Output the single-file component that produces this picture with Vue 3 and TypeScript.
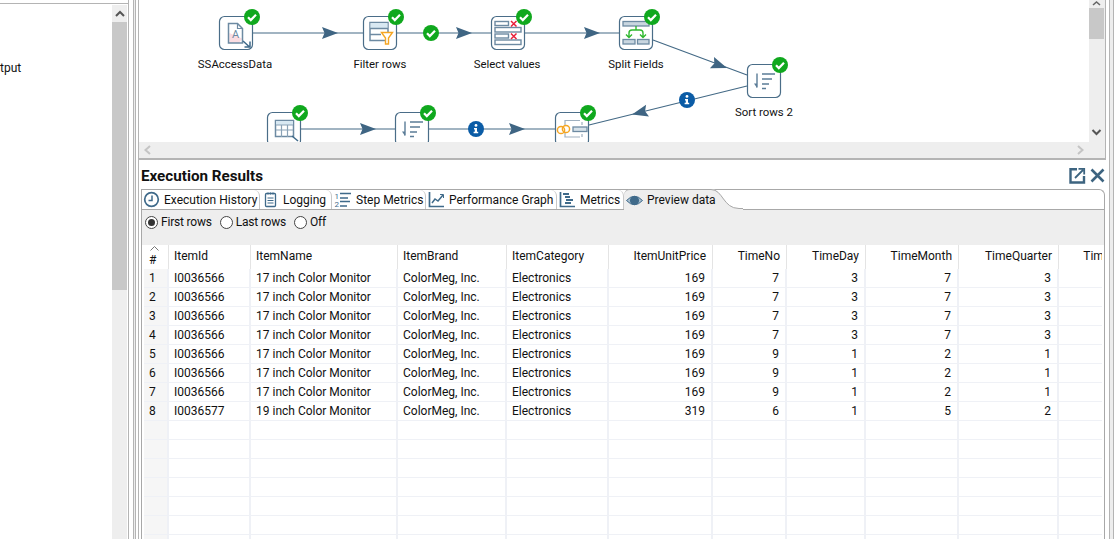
<script setup lang="ts">
interface Column { key: string; label: string; width: number; end?: boolean }
interface Arrow { x: number; y: number; angle: number }

const columns: Column[] = [
  { key: "id", label: "ItemId", width: 82 },
  { key: "name", label: "ItemName", width: 147 },
  { key: "brand", label: "ItemBrand", width: 109 },
  { key: "category", label: "ItemCategory", width: 102 },
  { key: "price", label: "ItemUnitPrice", width: 104, end: true },
  { key: "no", label: "TimeNo", width: 74, end: true },
  { key: "day", label: "TimeDay", width: 79, end: true },
  { key: "month", label: "TimeMonth", width: 93, end: true },
  { key: "quarter", label: "TimeQuarter", width: 100, end: true },
  { key: "year", label: "TimeYear", width: 82, end: true },
];

const row = (id: string, name: string, price: string, no: string, day: string, month: string, quarter: string): Record<string, string> => ({
  id, name, brand: "ColorMeg, Inc.", category: "Electronics", price, no, day, month, quarter, year: "",
});

const rows: Record<string, string>[] = [
  row("I0036566", "17 inch Color Monitor", "169", "7", "3", "7", "3"),
  row("I0036566", "17 inch Color Monitor", "169", "7", "3", "7", "3"),
  row("I0036566", "17 inch Color Monitor", "169", "7", "3", "7", "3"),
  row("I0036566", "17 inch Color Monitor", "169", "7", "3", "7", "3"),
  row("I0036566", "17 inch Color Monitor", "169", "9", "1", "2", "1"),
  row("I0036566", "17 inch Color Monitor", "169", "9", "1", "2", "1"),
  row("I0036566", "17 inch Color Monitor", "169", "9", "1", "2", "1"),
  row("I0036577", "19 inch Color Monitor", "319", "6", "1", "5", "2"),
];
const emptyRows = 7;

const nodes = [
  { x: 219, y: 16 }, { x: 363, y: 16 }, { x: 491, y: 16 }, { x: 619, y: 16 },
  { x: 747, y: 64 }, { x: 267, y: 112 }, { x: 395, y: 112 }, { x: 555, y: 112 },
];
const checks = [
  [252, 17], [396, 17], [524, 17], [652, 17], [780, 65], [300, 113], [428, 113], [588, 113], [431, 33],
];
const infos = [[476, 129], [687, 100]];
const labels = [
  { x: 235, y: 68, text: "SSAccessData" },
  { x: 380, y: 68, text: "Filter rows" },
  { x: 507, y: 68, text: "Select values" },
  { x: 636, y: 68, text: "Split Fields" },
  { x: 764, y: 116, text: "Sort rows 2" },
];
const arrows: Arrow[] = [
  { x: 338, y: 33, angle: 0 }, { x: 472, y: 33, angle: 0 }, { x: 600, y: 33, angle: 0 },
  { x: 727, y: 68, angle: 20 }, { x: 632, y: 114.5, angle: 166 },
  { x: 376, y: 129, angle: 0 }, { x: 525, y: 129, angle: 0 },
];
</script>

<template>
  <div class="app">
    <aside class="left">
      <div class="tree"><span class="tree-item">tput</span></div>
      <div class="vbar vbar--left">
        <svg class="arrow-ico" width="16" height="17" viewBox="0 0 16 17"><path d="M4 11l4-4 4 4" fill="none" stroke="#555" stroke-width="2" /></svg>
        <div class="thumb thumb--left"></div>
      </div>
    </aside>
    <div class="sash"></div>
    <main class="main">
      <section class="top">
        <div class="diagram">
          <svg class="graph" width="950" height="142" viewBox="139 0 950 142">
            <g fill="none" stroke="#446a86" stroke-width="1.2">
              <path d="M253 33H363M397 33H491M525 33H619M653 40L747 75M747 86L589 125M301 129H395M429 129H555" />
            </g>
            <polygon
              v-for="(a, i) in arrows"
              :key="'a' + i"
              points="0,0 -16,-6 -13.5,0 -16,6"
              fill="#3f6583"
              :transform="`translate(${a.x} ${a.y}) rotate(${a.angle})`"
            />
            <rect v-for="(n, i) in nodes" :key="'n' + i" :x="n.x + 0.5" :y="n.y + 0.5" width="33" height="33" rx="5" fill="#fff" stroke="#4a6d88" stroke-width="1.2" />

            <!-- SSAccessData -->
            <path d="M229.3 43V33L241 38l1 1-3 4z" fill="#fbdde2" />
            <path d="M228.5 23.5h9l5 5v14.5h-14z" fill="none" stroke="#6d8aa2" stroke-width="1.5" />
            <path d="M237.5 23.5v5h5" fill="none" stroke="#6d8aa2" stroke-width="1.2" />
            <text x="235.5" y="38" class="ico-a">A</text>
            <path d="M243 41l6 5.5M250 41.5V47h-5.5" fill="none" stroke="#3f6a8a" stroke-width="1.5" />

            <!-- Filter rows -->
            <path d="M370 22.5h18v18h-18z" fill="#fff" stroke="#6d8aa2" stroke-width="1.5" />
            <path d="M370.5 23h17v5h-17z" fill="#d8e8f2" />
            <path d="M370 28.5h18M370 34.5h11" stroke="#6d8aa2" stroke-width="1.3" />
            <path d="M381.5 32.5h11l-4 5.5v6h-3v-6z" fill="#fff" stroke="#f5a623" stroke-width="1.4" />

            <!-- Select values -->
            <g fill="#fff" stroke="#6d8aa2" stroke-width="1.4">
              <rect x="495" y="21.5" width="13.5" height="4" />
              <rect x="495" y="27.5" width="26" height="4.5" />
              <rect x="495" y="34" width="13.5" height="4" />
              <rect x="495" y="40" width="26" height="4.5" />
            </g>
            <path d="M511 21l5.5 5.5M516.5 21l-5.5 5.5M511 33.5l5.5 5.5M516.5 33.5l-5.5 5.5" stroke="#e8203a" stroke-width="1.5" />

            <!-- Split Fields -->
            <g fill="#c9d6e0" stroke="#6d8aa2" stroke-width="1.3">
              <rect x="623" y="21.5" width="26" height="4.5" />
              <rect x="623" y="39.5" width="12" height="4.5" />
              <rect x="637.5" y="39.5" width="11.5" height="4.5" />
            </g>
            <path d="M636 26v4M629 37v-4q0-3 3-3h8q3 0 3 3v4M626 34.5l3 3 3-3M640 34.5l3 3 3-3" fill="none" stroke="#2eb82e" stroke-width="1.4" />

            <!-- Sort rows -->
            <g v-for="s in [{ x: 747, y: 64 }, { x: 395, y: 112 }]" :key="s.x" :transform="`translate(${s.x} ${s.y})`">
              <path d="M10 9.5v14" stroke="#5b7c97" stroke-width="1.4" />
              <path d="M7 19.5l3 4.5 0-4.5z" fill="#5b7c97" />
              <path d="M15 10h13M15 15h10M15 20h7M15 24.5h4" stroke="#5b7c97" stroke-width="1.4" />
            </g>

            <!-- Table input -->
            <path d="M275.5 120.5h18v16h-18z" fill="#fff" stroke="#6d8aa2" stroke-width="1.5" />
            <path d="M276 121h17v4h-17z" fill="#d8e8f2" />
            <path d="M276 125h17M276 130h17M281.5 125v12M287.5 125v12" stroke="#8aa2b6" stroke-width="1.2" />
            <path d="M292 136l6 5" stroke="#3f6a8a" stroke-width="1.5" />

            <!-- Join rows -->
            <path d="M565 126v-5.5h15M565 132v5h15M582 122v3M582 134v3" fill="none" stroke="#9fb0bf" stroke-width="1.2" />
            <circle cx="561" cy="130" r="3.6" fill="none" stroke="#f5a623" stroke-width="1.5" />
            <circle cx="566" cy="129" r="3.6" fill="none" stroke="#f5a623" stroke-width="1.5" />
            <rect x="573" y="127" width="14" height="4.5" fill="#d7e2ea" stroke="#6d8aa2" stroke-width="1.3" />

            <g v-for="(c, i) in checks" :key="'c' + i" :transform="`translate(${c[0]} ${c[1]})`">
              <circle r="8" fill="#10a81e" />
              <path d="M-4 0.3l2.8 2.8 5.2-5.4" fill="none" stroke="#fff" stroke-width="2.2" />
            </g>
            <g v-for="(c, i) in infos" :key="'i' + i" :transform="`translate(${c[0]} ${c[1]})`">
              <circle r="8" fill="#0b5ca6" />
              <circle cx="0" cy="-3.6" r="1.4" fill="#fff" />
              <path d="M-2 -1h3v3.7h1.2v1.6h-4.6v-1.6h1.2v-2.2h-0.8z" fill="#fff" />
            </g>
            <text v-for="l in labels" :key="l.text" :x="l.x" :y="l.y" class="node-label">{{ l.text }}</text>
          </svg>
        </div>
        <div class="vbar vbar--top">
          <svg class="arrow-ico" width="15" height="8" viewBox="0 0 15 8"><path d="M4 5l3.5-3 3.5 3" fill="none" stroke="#666" stroke-width="1.6" /></svg>
          <div class="thumb thumb--top"></div>
          <svg class="arrow-ico arrow-ico--down" width="15" height="10" viewBox="0 0 15 10"><path d="M3.5 3l4 4 4-4" fill="none" stroke="#555" stroke-width="2" /></svg>
        </div>
        <div class="hbar">
          <svg width="10" height="12" viewBox="0 0 10 12"><path d="M7 2L2.5 6 7 10" fill="none" stroke="#c4c4c4" stroke-width="2" /></svg>
          <svg width="10" height="12" viewBox="0 0 10 12"><path d="M3 2l4.5 4L3 10" fill="none" stroke="#c4c4c4" stroke-width="2" /></svg>
        </div>
      </section>

      <section class="results">
        <header class="results-head">
          <h2 class="title">Execution Results</h2>
          <div class="head-icons">
            <svg width="17" height="17" viewBox="0 0 17 17">
              <path d="M8 2.2H1.5v13.3H15V9" fill="none" stroke="#3d6480" stroke-width="2.4" />
              <path d="M6 11l8-8M9.5 1.8h5.7v5.7" fill="none" stroke="#3d6480" stroke-width="1.8" />
            </svg>
            <svg width="15" height="15" viewBox="0 0 15 15"><path d="M1.5 1.5l12 12M13.5 1.5l-12 12" stroke="#3d6480" stroke-width="2.6" /></svg>
          </div>
        </header>

        <div class="folder">
          <nav class="tabs">
            <div class="tab" style="width: 119px">
              <svg width="17" height="17" viewBox="0 0 17 17"><circle cx="8.5" cy="8.5" r="6.8" fill="#fff" stroke="#3f6a8a" stroke-width="1.7" /><path d="M9 4.5V9.5H5.5" fill="none" stroke="#3f6a8a" stroke-width="1.5" /></svg>
              <span>Execution History</span>
            </div>
            <div class="tab" style="width: 72px">
              <svg width="17" height="17" viewBox="0 0 17 17"><rect x="3.5" y="2.5" width="10" height="13" rx="1" fill="#fff" stroke="#3f6a8a" stroke-width="1.3" /><path d="M6 1.5v2M8.5 1.5v2M11 1.5v2M5.5 7h6M5.5 9.5h6M5.5 12h6" stroke="#3f6a8a" stroke-width="1.1" /></svg>
              <span>Logging</span>
            </div>
            <div class="tab" style="width: 94px">
              <svg width="18" height="17" viewBox="0 0 18 17"><text x="0.5" y="7.5" class="tab-num">1</text><text x="0.5" y="16" class="tab-num">2</text><path d="M6 2.5h11M6 7h8M6 10.5h10M6 15h7" stroke="#3f6a8a" stroke-width="1.3" /></svg>
              <span>Step Metrics</span>
            </div>
            <div class="tab" style="width: 131px">
              <svg width="17" height="17" viewBox="0 0 17 17"><path d="M1.5 1v14.5H16" fill="none" stroke="#3f6a8a" stroke-width="1.7" /><path d="M4 12l3-4 3 2 5-6" fill="none" stroke="#3f6a8a" stroke-width="1.5" /><path d="M12 3.5h3.5V7" fill="none" stroke="#3f6a8a" stroke-width="1" /></svg>
              <span>Performance Graph</span>
            </div>
            <div class="tab" style="width: 67px">
              <svg width="17" height="17" viewBox="0 0 17 17"><path d="M1.5 1v14.5H16" fill="none" stroke="#3f6a8a" stroke-width="1.7" /><path d="M4 3h6M6 6h5M7 9h7M6 12h6" stroke="#3f6a8a" stroke-width="2" /></svg>
              <span>Metrics</span>
            </div>
            <div class="tab tab--active">
              <svg width="17" height="17" viewBox="0 0 17 17"><path d="M0.5 8.5Q8.5 0 16.5 8.5 8.5 17 0.5 8.5z" fill="#aac0d0" stroke="#3f6a8a" stroke-width="1" /><circle cx="8.5" cy="8.5" r="4.6" fill="#3f6a8a" /></svg>
              <span class="tab-text">Preview data</span>
              <svg class="tab-curve" width="36" height="21" viewBox="0 0 36 21"><path d="M0 0h4C16 0 16 19 32 19h4v2H0z" fill="#eee" /><path d="M0 .5h4C16 .5 16 19.5 32 19.5h4" fill="none" stroke="#a8a8a8" stroke-width="1" /></svg>
            </div>
          </nav>

          <div class="options">
            <label class="radio"><i class="dot dot--on"></i>First rows</label>
            <label class="radio"><i class="dot"></i>Last rows</label>
            <label class="radio"><i class="dot"></i>Off</label>
          </div>

          <div class="grid-wrap">
            <table class="grid">
              <colgroup>
                <col style="width: 25px" />
                <col v-for="c in columns" :key="c.key" :style="{ width: c.width + 'px' }" />
              </colgroup>
              <thead>
                <tr>
                  <th class="num">
                    <svg class="caret" width="9" height="5" viewBox="0 0 9 5"><path d="M.5 4.5l4-4 4 4" fill="none" stroke="#777" /></svg>
                    #
                  </th>
                  <th v-for="c in columns" :key="c.key" :class="{ end: c.end }">{{ c.label }}</th>
                </tr>
              </thead>
              <tbody>
                <tr v-for="(r, i) in rows" :key="i">
                  <td class="num">{{ i + 1 }}</td>
                  <td v-for="c in columns" :key="c.key" :class="{ end: c.end }">{{ r[c.key] }}</td>
                </tr>
                <tr v-for="n in emptyRows" :key="'e' + n">
                  <td class="num"></td>
                  <td v-for="c in columns" :key="c.key"></td>
                </tr>
              </tbody>
            </table>
          </div>
        </div>
      </section>
    </main>
    <div class="edge"></div>
  </div>
</template>

<style>
html, body { margin: 0; background: #fff; overflow: hidden; }
</style>

<style scoped>
.app { display: flex; width: 1114px; height: 539px; overflow: hidden; background: #fff; font: 12px Roboto, "Liberation Sans", sans-serif; color: #111; }

.left { flex: none; width: 128px; height: 539px; display: flex; border-right: 1px solid #b4b4b4; position: relative; }
.left::before { content: ""; position: absolute; left: 0; right: 0; top: 3px; height: 1px; background: #b4b4b4; }
.tree { flex: 1; padding-top: 61px; }
.tree-item { display: block; line-height: 14px; }
.vbar--left { flex: none; width: 15px; margin: 5px 1px 0 0; background: #eee; }
.arrow-ico { display: block; }
.thumb { background: #c8c8c8; }
.thumb--left { height: 268px; }

.sash { flex: none; width: 10px; box-sizing: border-box; border-right: 1px solid #b4b4b4; position: relative; }
.sash::before { content: ""; position: absolute; left: 4px; top: 0; bottom: 0; width: 3px; box-sizing: border-box; border-left: 1px solid #b4b4b4; border-right: 1px solid #b4b4b4; background: #ededed; }

.main { flex: none; width: 967px; height: 539px; display: flex; flex-direction: column; }
.edge { flex: 1; margin-left: 3px; box-sizing: border-box; width: 5px; border-left: 1px solid #b4b4b4; border-right: 1px solid #b4b4b4; background: #ededed; }

.top { flex: none; height: 158px; display: grid; grid-template-columns: 950px 1fr; grid-template-rows: 142px 16px; background: #eee; border-bottom: 2px solid #b4b4b4; border-right: 1px solid #b4b4b4; }
.diagram { background: #fff; overflow: hidden; position: relative; }
.graph { position: absolute; left: 0; top: 0; display: block; }
.graph text { font-family: Roboto, "Liberation Sans", sans-serif; }
.node-label { font-size: 11.4px; text-anchor: middle; fill: #111; }
.ico-a { font-size: 11px; text-anchor: middle; fill: #6d8aa2; }
.tab-num { font-size: 8px; fill: #3f6a8a; font-family: Roboto, sans-serif; }

.vbar--top { width: 15px; display: flex; flex-direction: column; }
.thumb--top { height: 31px; }
.arrow-ico--down { margin-top: auto; margin-bottom: 5px; }
.hbar { grid-column: 1 / 3; display: flex; justify-content: space-between; align-items: center; padding: 0 20px 0 4px; }

.results { flex: 1; min-height: 0; padding: 0 1px 0 2px; display: flex; flex-direction: column; }
.results-head { flex: none; height: 29px; display: flex; justify-content: space-between; align-items: center; }
.title { margin: 0; font-size: 15.2px; font-weight: 700; color: #111; line-height: 18px; padding-top: 3px; }
.head-icons { display: flex; align-items: center; gap: 4px; padding-top: 2px; }

.folder { flex: 1; min-height: 0; display: flex; flex-direction: column; border: 1px solid #a8a8a8; border-bottom: 0; border-top-right-radius: 6px; background: #fff; }
.tabs { flex: none; height: 19px; display: flex; border-bottom: 1px solid #a8a8a8; margin-left: -1px; }
.tab { flex: none; display: flex; align-items: center; gap: 4px; padding-left: 2px; box-sizing: border-box; height: 19px; border-right: 1px solid #c8c8c8; border-top-right-radius: 6px; white-space: nowrap; }
.tab svg { flex: none; }
.tab--active { position: relative; background: #eee; border-right: 0; border-radius: 6px 0 0 0; width: 84px; margin-top: -1px; height: 21px; border-top: 1px solid #a8a8a8; }
.tab-text { position: relative; z-index: 1; }
.tab-curve { position: absolute; left: 83px; top: -1px; }

.options { flex: none; height: 35px; display: flex; align-items: flex-start; gap: 8px; padding: 4px 0 0 3px; box-sizing: border-box; background: #eee; }
.radio { display: flex; align-items: center; gap: 3px; height: 16px; letter-spacing: -.2px; }
.dot { width: 13px; height: 13px; box-sizing: border-box; border: 1px solid #444; border-radius: 50%; background: #fff; display: block; position: relative; }
.dot--on::after { content: ""; position: absolute; inset: 2px; border-radius: 50%; background: #333; }

.grid-wrap { flex: 1; min-height: 0; overflow: hidden; padding-left: 2px; margin-right: 2px; }
.grid { table-layout: fixed; width: 997px; border-collapse: separate; border-spacing: 0; background: #fff; }
.grid th, .grid td { padding: 0 6px 0 5px; overflow: hidden; white-space: nowrap; text-align: left; font-weight: 400; box-sizing: border-box; }
.grid th { height: 24px; padding-bottom: 2px; border-right: 1px solid #e4e4e4; position: relative; }
.grid td { height: 19px; border-right: 2px solid #eff1f6; border-bottom: 1px solid #eff1f6; }
.grid .end { text-align: right; }
.grid .num { background: #f6f6f6; padding-left: 5px; }
.grid th.num { background: #fff; padding-top: 6px; padding-bottom: 0; }
.caret { position: absolute; left: 6px; top: 1px; }
</style>
